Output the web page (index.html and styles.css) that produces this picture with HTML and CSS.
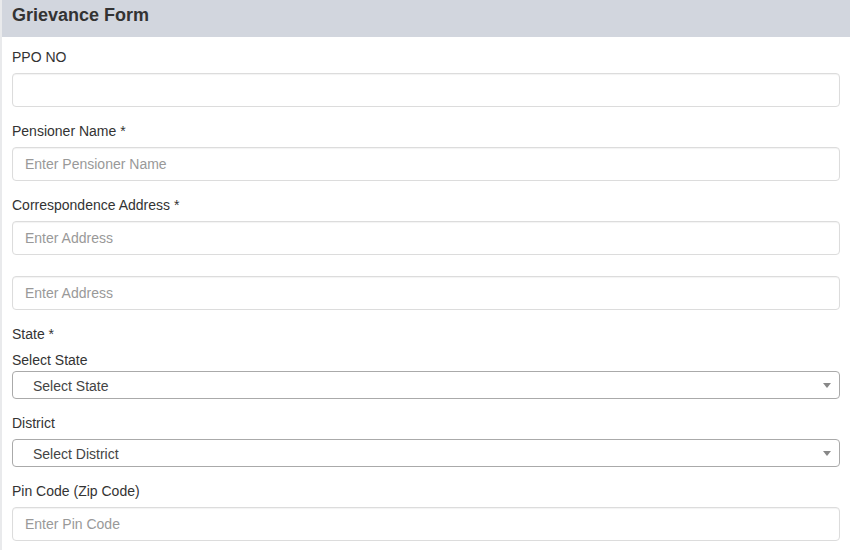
FILE: index.html
```html
<!DOCTYPE html>
<html>
<head>
<meta charset="utf-8">
<link rel="stylesheet" href="styles.css">
</head>
<body>
<div class="box">
  <div class="box-header"><h3 class="box-title">Grievance Form</h3></div>
  <div class="box-body">
    <div class="group">
      <label class="lbl">PPO NO</label>
      <input class="ctrl" type="text">
    </div>
    <div class="group">
      <label class="lbl">Pensioner Name *</label>
      <input class="ctrl" type="text" placeholder="Enter Pensioner Name">
    </div>
    <div class="group">
      <label class="lbl">Correspondence Address *</label>
      <input class="ctrl" type="text" placeholder="Enter Address">
    </div>
    <div class="group group-nolabel">
      <input class="ctrl" type="text" placeholder="Enter Address">
    </div>
    <div class="group">
      <label class="lbl">State *</label>
      <label class="lbl">Select State</label>
      <div class="sel"><span class="sel-text">Select State</span><b class="arrow"></b></div>
    </div>
    <div class="group">
      <label class="lbl">District</label>
      <div class="sel"><span class="sel-text">Select District</span><b class="arrow"></b></div>
    </div>
    <div class="group">
      <label class="lbl">Pin Code (Zip Code)</label>
      <input class="ctrl" type="text" placeholder="Enter Pin Code">
    </div>
  </div>
</div>
</body>
</html>
```
FILE: styles.css
```css
* { box-sizing: border-box; }
html, body { margin: 0; padding: 0; background: #fff; }
body { font-family: "Liberation Sans", Arial, sans-serif; color: #333; font-size: 14px; }
.box { border-left: 2px solid #e9eaec; min-height: 550px; }
.box-header { background: #d2d6de; height: 37px; padding: 4px 10px 0 10px; }
.box-title { margin: 0; font-size: 18px; line-height: 22px; font-weight: bold; color: #333; }
.box-body { padding: 10px 10px 0 10px; }
.group { display: flex; flex-direction: column; margin-bottom: 14px; }
.group-nolabel { padding-top: 7px; }
.lbl { display: block; line-height: 20px; margin-bottom: 6px; font-size: 14px; color: #333; }
.lbl + .lbl { margin-bottom: 1px; }
.ctrl { display: block; width: 100%; height: 34px; border: 1px solid #dcdcdc; border-radius: 4px; padding: 6px 12px; font-family: inherit; font-size: 14px; color: #555; box-shadow: inset 0 1px 1px rgba(0,0,0,0.05); outline: none; }
.ctrl::placeholder { color: #999; }
.sel { position: relative; height: 28px; border: 1px solid #aaa; border-radius: 4px; background: #fff; padding: 3px 0 0 20px; }
.sel-text { display: block; color: #444; font-size: 14px; line-height: 23px; }
.arrow { position: absolute; right: 8px; top: 11px; width: 0; height: 0; border-left: 4px solid transparent; border-right: 4px solid transparent; border-top: 5px solid #888; }
```
